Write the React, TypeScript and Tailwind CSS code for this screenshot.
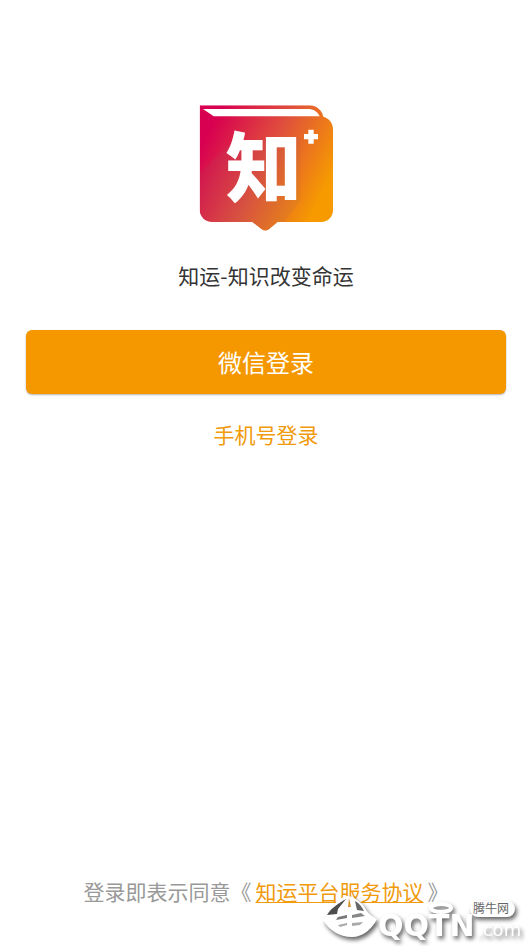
import { useId } from "react";

const FONT = "font-['Noto_Sans_CJK_SC','Noto_Sans',sans-serif]";

function AppLogo() {
  const id = useId();

  return (
    <svg viewBox="26 31 402 378" className="w-[134px] h-[126px]" role="img" aria-label="知运">
      <defs>
        <linearGradient id={`${id}-bg`} gradientUnits="userSpaceOnUse" x1="55" y1="110" x2="405" y2="280">
          <stop offset="0" stopColor="#d80050" />
          <stop offset="0.5" stopColor="#e0503c" />
          <stop offset="1" stopColor="#f69a00" />
        </linearGradient>
        <clipPath id={`${id}-clip`}>
          <path d="M28 32H358C379 33 395 47 399 66C416 70 428 85 428 104V346C428 366 413 382 393 382H262L236 404Q225 412 214 404L186 382H66C44 382 28 365 28 345Z" />
        </clipPath>
      </defs>
      <g clipPath={`url(#${id}-clip)`}>
        <rect x="26" y="31" width="402" height="378" fill={`url(#${id}-bg)`} />
        {/* sombra diagonal */}
        <path d="M28 235L115 150L330 128V318L260 409H28Z" fill="#a06060" opacity="0.12" />
      </g>
      <path d="M38 43H352C370 43 382 51 388 65H70Z" fill="#fff" />
      <text
        x="220"
        y="304"
        textAnchor="middle"
        fontSize="228"
        className="font-['Noto_Sans_CJK_SC',sans-serif] font-black"
        fill="#fff"
      >
        知
      </text>
      <path d="M362 105V147M341 126H383" stroke="#fff" strokeWidth="16" />
    </svg>
  );
}

function Watermark() {
  return (
    <svg
      viewBox="0 0 222 76"
      className="absolute bottom-0 right-0 w-[222px] h-[76px] pointer-events-none"
      aria-hidden="true"
    >
      <g className="[filter:drop-shadow(2px_3px_2px_rgba(0,0,0,0.6))]" fill="#fff">
        <path d="M13 50C19 45 21 39 25 34C29 28 35 26 38 26C44 27 51 31 55 38C58 44 63 47 67 49C62 59 53 67 42 67C29 67 19 60 13 50Z" />
        <ellipse cx="131" cy="38" rx="10" ry="4" fill="none" stroke="#fff" strokeWidth="4" />
        <rect x="160" y="31" width="45" height="16" rx="8" />
        <text x="68" y="66" fontSize="30" className="font-['DejaVu_Sans',sans-serif] font-bold">
          QQTN
        </text>
        <text x="167" y="66" fontSize="18" className="font-['DejaVu_Sans',sans-serif]">
          .com
        </text>
      </g>
      {/* huecos del emblema */}
      <g>
        <path d="M36 29C29 33 21 38 17 45L27 44L28 39Z" fill="#4d4d4d" />
        <path d="M45 31C49 33 52 37 54 41L47 40Z" fill="#666" />
        <path d="M39 28L41 37H38Z" fill="#d9932e" />
        <path d="M28 47L37 45V48L26 50Z" fill="#777" />
        <path d="M42 45L51 43L55 46L42 48Z" fill="#888" />
        <path d="M28 55L37 53V55L30 57Z" fill="#aaa" />
        <path d="M42 53L53 52L50 55L42 56Z" fill="#aaa" />
      </g>
      <text x="163" y="43" fontSize="12" className={FONT} fill="#666">
        腾牛网
      </text>
    </svg>
  );
}

export default function LoginPage() {
  return (
    <main
      className={`relative min-h-screen flex flex-col items-center bg-white px-[26px] pt-[105px] pb-[39px] text-[21px] leading-8 ${FONT}`}
    >
      <AppLogo />
      <h1 className="mt-7 text-[#333]">知运-知识改变命运</h1>

      <button
        type="button"
        className="mt-[39px] h-16 w-full rounded-md bg-[#f59800] text-2xl text-white shadow-[0_1px_2px_rgba(0,0,0,0.3)]"
      >
        微信登录
      </button>
      <button type="button" className="mt-6 text-[#f09a0c]">
        手机号登录
      </button>

      <p className="mt-auto text-[#999]">
        登录即表示同意《
        <a href="#terms" className="mx-1 text-[#f09a0c] underline underline-offset-2 decoration-1">
          知运平台服务协议
        </a>
        》
      </p>
      <Watermark />
    </main>
  );
}
